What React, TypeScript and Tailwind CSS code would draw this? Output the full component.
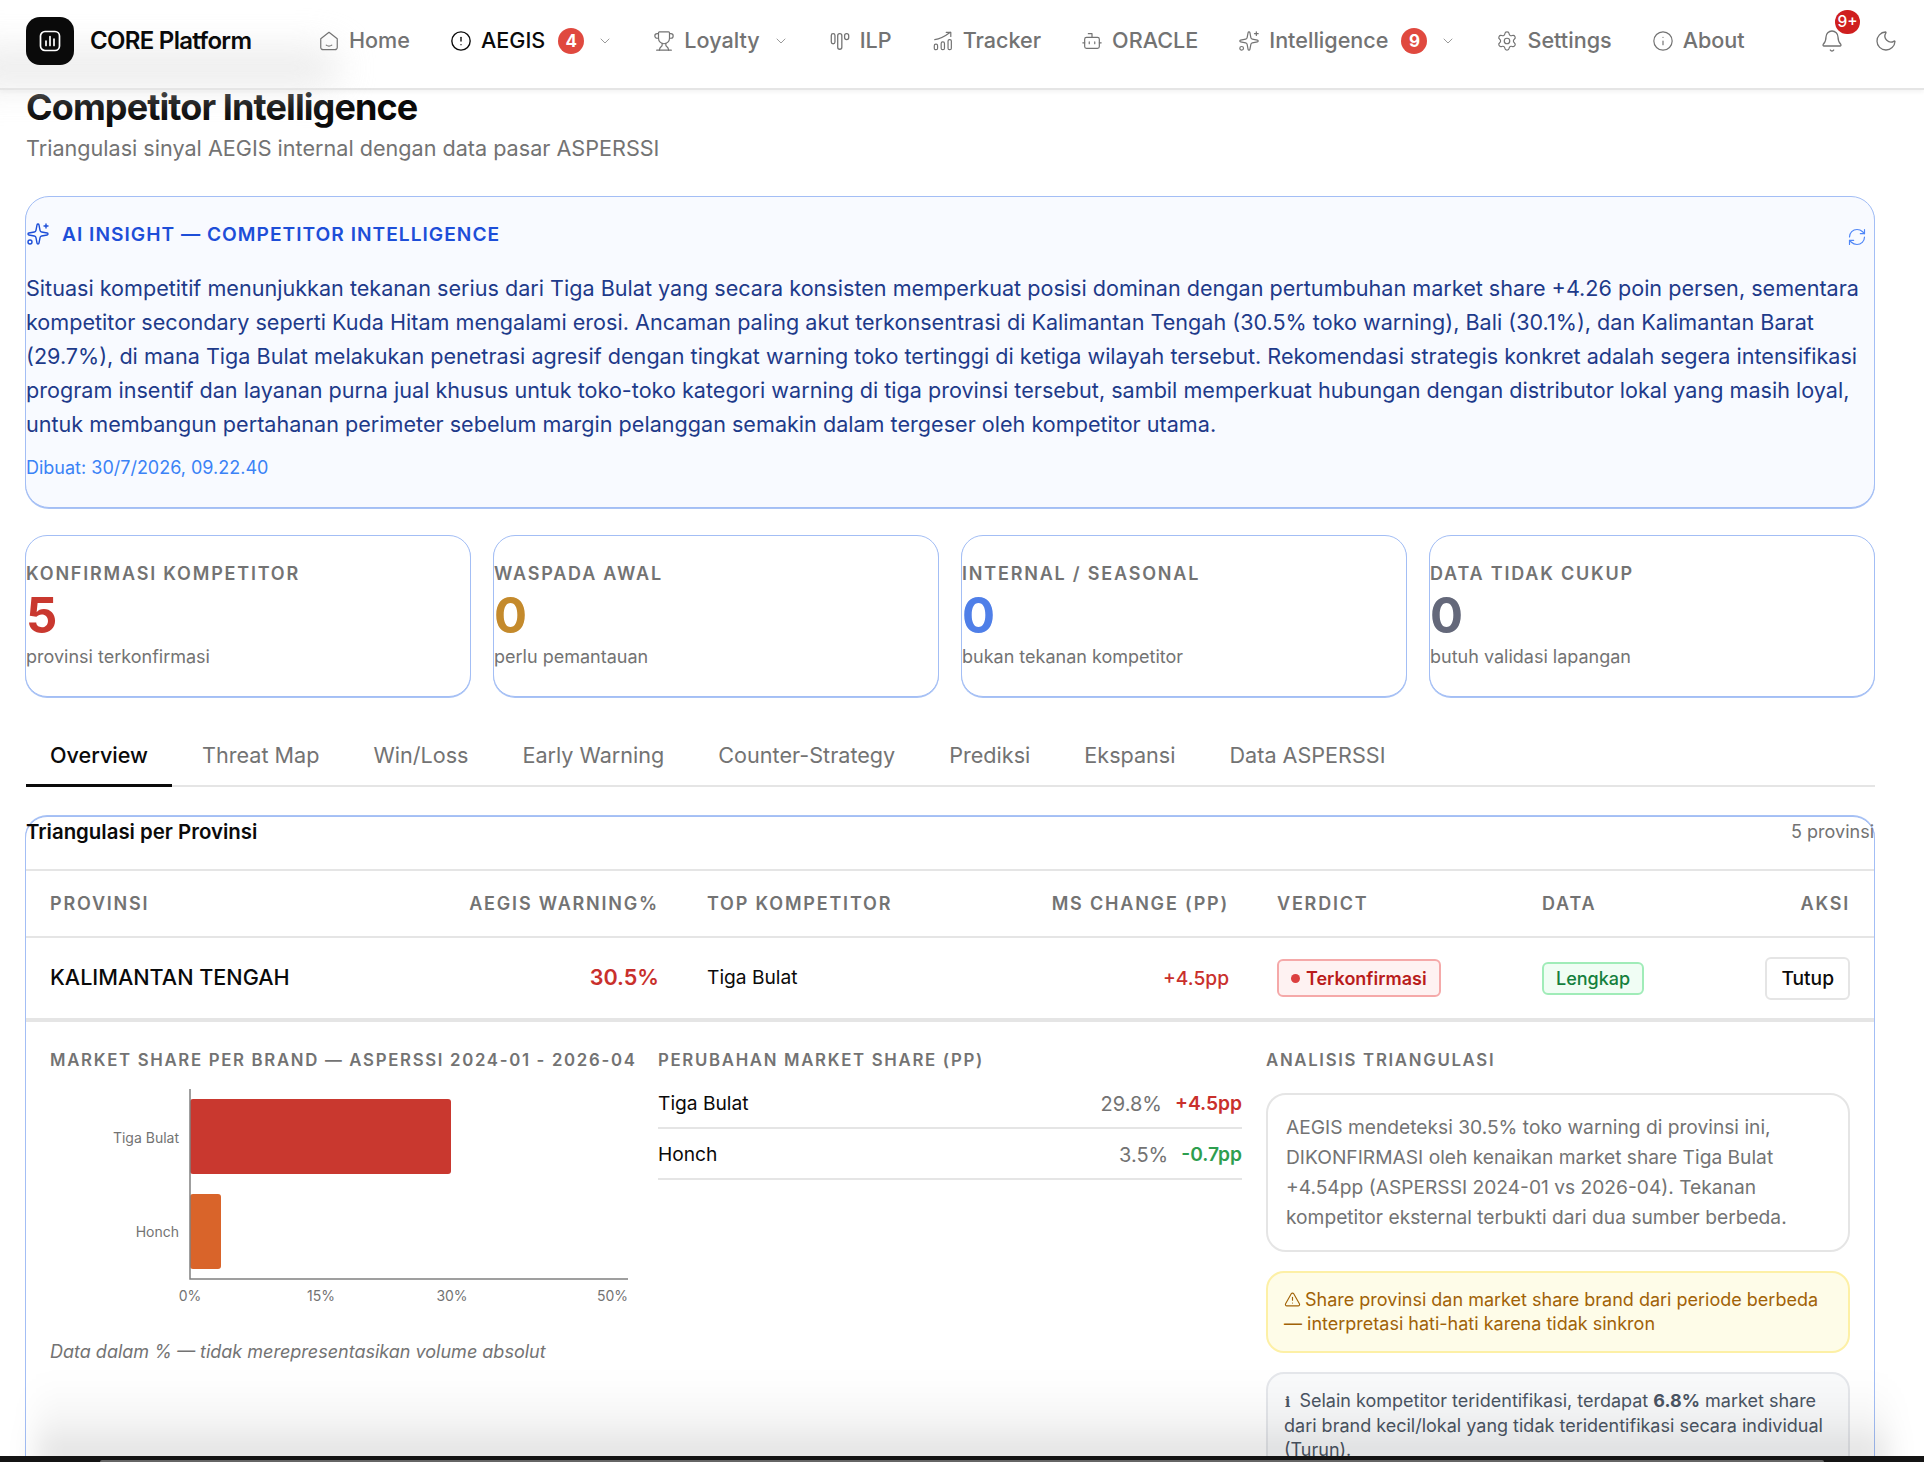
import React from "react";
import { CircleAlert, ChevronDown, Trophy, Bot, Sparkles, Settings, Info, Bell, Moon, RefreshCw, TriangleAlert } from "lucide-react";

const HomeIcon = () => (
  <svg width="22" height="22" viewBox="0 0 24 24" fill="none" stroke="currentColor" strokeWidth="1.3" strokeLinejoin="round" strokeLinecap="round">
    <path d="M12 2.5 21 9.5V19a2.5 2.5 0 0 1-2.5 2.5h-13A2.5 2.5 0 0 1 3 19V9.5Z" />
    <path d="M9 16.5c1.6 1.2 4.4 1.2 6 0" />
  </svg>
);
const IlpIcon = () => (
  <svg width="22" height="22" viewBox="0 0 24 24" fill="none" stroke="currentColor" strokeWidth="1.4">
    <rect x="2.5" y="4" width="4" height="11" rx="2" />
    <rect x="9.5" y="4" width="4.5" height="17" rx="2.2" />
    <rect x="17" y="4" width="4.5" height="6.5" rx="2.2" />
  </svg>
);
const TrackerIcon = () => (
  <svg width="22" height="22" viewBox="0 0 24 24" fill="none" stroke="currentColor" strokeWidth="1.3" strokeLinecap="round" strokeLinejoin="round">
    <rect x="2.5" y="15.5" width="3.6" height="6" rx="1.6" />
    <rect x="10" y="13" width="3.6" height="8.5" rx="1.6" />
    <rect x="17.5" y="10.5" width="3.6" height="11" rx="1.6" />
    <path d="M3 10.5 C8 10 14 7 20 2.5" />
    <path d="M15.5 2.5H20.5V7" />
  </svg>
);
const LogoIcon = () => (
  <svg width="24" height="24" viewBox="0 0 24 24" fill="none" stroke="white" strokeWidth="1.7" strokeLinecap="round">
    <rect x="2.5" y="2.5" width="19" height="19" rx="4.5" />
    <path d="M8 16.5V12M12 16.5V7.5M16 16.5V10" />
  </svg>
);

function NavItem({ icon, label, active, badge, chevron }: { icon: React.ReactNode; label: string; active?: boolean; badge?: string; chevron?: boolean }) {
  return (
    <div className={`flex items-center ${active ? "text-[#0a0a0a]" : "text-[#737373]"}`}>
      <span className="flex w-[22px] justify-center">{icon}</span>
      <span className="ml-[9px] text-[21.6px] leading-none font-medium whitespace-nowrap">{label}</span>
      {badge && (
        <span className="ml-[13px] flex h-[26px] w-[26px] items-center justify-center rounded-full bg-[#e0493f] text-[17px] leading-none font-bold text-white">{badge}</span>
      )}
      {chevron && <ChevronDown size={16} strokeWidth={1.3} className="ml-[13px] text-[#8a8a8a]" />}
    </div>
  );
}

function Stat({ label, value, sub, color }: { label: string; value: string; sub: string; color: string }) {
  return (
    <div className="h-[162px] rounded-[22px] border border-[#a3bef5] bg-white pt-[26px] shadow-[0_1px_0_#a9c3f5]">
      <div className="text-[18px] leading-[24px] font-semibold tracking-[1.8px] text-[#737373]">{label}</div>
      <div className={`mt-[2px] text-[49px] leading-[56px] font-bold ${color}`}>{value}</div>
      <div className="text-[18px] leading-[26px] text-[#737373]">{sub}</div>
    </div>
  );
}

const tabs = ["Threat Map", "Win/Loss", "Early Warning", "Counter-Strategy", "Prediksi", "Ekspansi", "Data ASPERSSI"];

export default function App() {
  return (
    <div className="relative h-[1462px] w-[1924px] overflow-hidden bg-white font-['Inter',sans-serif] text-[#0a0a0a]">
      <header className="relative flex h-[90px] items-center border-b-2 border-[#e5e5e5] bg-white px-[26px] pb-[6px] shadow-[0_2px_4px_rgba(0,0,0,0.05)]">
        <div className="absolute top-[48px] left-[-40px] h-[40px] w-[380px] rounded-full bg-[#e4e4e4] opacity-70 blur-[18px]" />
        <div className="relative flex h-[48px] w-[48px] items-center justify-center rounded-[14px] bg-[#0a0a0a]"><LogoIcon /></div>
        <div className="relative ml-[16px] w-[228px] text-[24px] leading-none font-semibold tracking-[-0.7px]">CORE Platform</div>
        <nav className="relative flex items-center gap-[40px]">
          <NavItem icon={<HomeIcon />} label="Home" />
          <NavItem icon={<CircleAlert size={22} strokeWidth={1.5} />} label="AEGIS" active badge="4" chevron />
          <NavItem icon={<Trophy size={22} strokeWidth={1.3} />} label="Loyalty" chevron />
          <NavItem icon={<IlpIcon />} label="ILP" />
          <NavItem icon={<TrackerIcon />} label="Tracker" />
          <NavItem icon={<Bot size={22} strokeWidth={1.3} />} label="ORACLE" />
          <NavItem icon={<Sparkles size={22} strokeWidth={1.3} />} label="Intelligence" badge="9" chevron />
          <NavItem icon={<Settings size={22} strokeWidth={1.3} />} label="Settings" />
          <NavItem icon={<Info size={22} strokeWidth={1.3} />} label="About" />
        </nav>
        <div className="relative ml-auto flex items-center gap-[30px] text-[#737373]">
          <div className="relative">
            <Bell size={24} strokeWidth={1.3} />
            <span className="absolute top-[-19px] left-[15px] flex h-[24px] w-[25px] items-center justify-center rounded-full bg-[#cf1f1f] text-[15.5px] leading-none font-medium text-white">9+</span>
          </div>
          <Moon size={24} strokeWidth={1.3} />
        </div>
      </header>

      <main className="w-[1875px] pl-[26px]">
        <h1 className="mt-[-3px] text-[36px] leading-[40px] font-bold tracking-[-0.9px]">Competitor Intelligence</h1>
        <p className="mt-[5px] text-[21.6px] leading-[32px] text-[#737373]">Triangulasi sinyal AEGIS internal dengan data pasar ASPERSSI</p>

        <section className="-ml-px mt-[32px] h-[312px] rounded-[24px] border border-[#a3bef5] bg-[#f8faff] pt-[21px] shadow-[0_1px_0_#a9c3f5]">
          <div className="flex items-center">
            <Sparkles size={24} strokeWidth={1.4} className="text-[#1d4ed8]" />
            <span className="ml-[12px] text-[19.2px] leading-[32px] font-semibold tracking-[1px] text-[#1d4ed8]">AI INSIGHT — COMPETITOR INTELLIGENCE</span>
            <RefreshCw size={20} strokeWidth={1.4} className="mt-[6px] mr-[7px] ml-auto text-[#4f86f7]" />
          </div>
          <p className="mt-[21px] pr-[8px] text-[21.6px] leading-[34px] text-[#1e3a8a]">
            Situasi kompetitif menunjukkan tekanan serius dari Tiga Bulat yang secara konsisten memperkuat posisi dominan dengan pertumbuhan market share +4.26 poin persen, sementara kompetitor secondary seperti Kuda Hitam mengalami erosi. Ancaman paling akut terkonsentrasi di Kalimantan Tengah (30.5% toko warning), Bali (30.1%), dan Kalimantan Barat (29.7%), di mana Tiga Bulat melakukan penetrasi agresif dengan tingkat warning toko tertinggi di ketiga wilayah tersebut. Rekomendasi strategis konkret adalah segera intensifikasi program insentif dan layanan purna jual khusus untuk toko-toko kategori warning di tiga provinsi tersebut, sambil memperkuat hubungan dengan distributor lokal yang masih loyal, untuk membangun pertahanan perimeter sebelum margin pelanggan semakin dalam tergeser oleh kompetitor utama.
          </p>
          <div className="mt-[13px] text-[18px] leading-[28px] text-[#3b82f6]">Dibuat: 30/7/2026, 09.22.40</div>
        </section>

        <div className="-ml-px mt-[27px] grid grid-cols-4 gap-[22px]">
          <Stat label="KONFIRMASI KOMPETITOR" value="5" sub="provinsi terkonfirmasi" color="text-[#c9382f]" />
          <Stat label="WASPADA AWAL" value="0" sub="perlu pemantauan" color="text-[#c48a2c]" />
          <Stat label="INTERNAL / SEASONAL" value="0" sub="bukan tekanan kompetitor" color="text-[#4f7fe8]" />
          <Stat label="DATA TIDAK CUKUP" value="0" sub="butuh validasi lapangan" color="text-[#64687a]" />
        </div>

        <div className="mt-[26px] flex h-[64px] gap-[6px] border-b-2 border-[#e5e5e5]">
          <div className="h-[64px] border-b-[3px] border-[#0a0a0a] px-[24px] pt-[16px] text-[21.6px] leading-[32px] font-medium">Overview</div>
          {tabs.map((t) => (
            <div key={t} className="px-[24px] pt-[16px] text-[21.6px] leading-[32px] whitespace-nowrap text-[#737373]">{t}</div>
          ))}
        </div>

        <section className="-ml-px mt-[29px] h-[700px] rounded-t-[22px] border border-[#a3bef5] bg-white shadow-[0_-1px_0_#a9c3f5]">
          <div className="flex h-[54px] items-start justify-between border-b-2 border-[#e5e5e5]">
            <span className="text-[20.4px] leading-[30px] font-semibold">Triangulasi per Provinsi</span>
            <span className="text-[18px] leading-[30px] text-[#737373]">5 provinsi</span>
          </div>
          <table className="w-full table-fixed border-collapse">
            <colgroup>
              <col className="w-[380px]" /><col className="w-[277px]" /><col className="w-[260px]" /><col className="w-[310px]" /><col className="w-[265px]" /><col className="w-[200px]" /><col />
            </colgroup>
            <thead>
              <tr className="h-[66px] border-b-2 border-[#e5e5e5] text-[18px] tracking-[1.8px] text-[#737373]">
                <th className="px-[24px] text-left font-semibold">PROVINSI</th>
                <th className="px-[24px] text-right font-semibold whitespace-nowrap">AEGIS WARNING%</th>
                <th className="px-[24px] text-left font-semibold whitespace-nowrap">TOP KOMPETITOR</th>
                <th className="px-[24px] text-right font-semibold whitespace-nowrap">MS CHANGE (PP)</th>
                <th className="px-[24px] text-left font-semibold">VERDICT</th>
                <th className="px-[24px] text-left font-semibold">DATA</th>
                <th className="px-[24px] text-right font-semibold">AKSI</th>
              </tr>
            </thead>
            <tbody>
              <tr className="h-[83px] border-b-[4px] border-[#e5e5e5]">
                <td className="px-[24px] pb-[2px] text-[21.6px] font-medium whitespace-nowrap">KALIMANTAN TENGAH</td>
                <td className="px-[24px] pb-[2px] text-right text-[21.6px] font-semibold text-[#c9302c]">30.5%</td>
                <td className="px-[24px] pb-[2px] text-[19.2px]">Tiga Bulat</td>
                <td className="px-[24px] text-right text-[19.2px] font-medium text-[#c9302c]">+4.5pp</td>
                <td className="px-[24px]">
                  <span className="inline-flex h-[38px] items-center gap-[6px] rounded-[6px] border-2 border-[#f5a9a9] bg-[#fef2f2] px-[12px] text-[18px] font-semibold text-[#b91c1c]">
                    <span className="h-[9px] w-[9px] rounded-full bg-[#dc4040]" />Terkonfirmasi
                  </span>
                </td>
                <td className="px-[24px]">
                  <span className="inline-flex h-[33px] items-center rounded-[6px] border-2 border-[#a0ecb8] bg-[#f0fdf4] px-[12px] text-[18px] font-medium text-[#15803d]">Lengkap</span>
                </td>
                <td className="px-[24px] text-right">
                  <span className="inline-flex h-[43px] items-center rounded-[6px] border-2 border-[#e5e5e5] px-[14px] text-[19.2px] font-medium">Tutup</span>
                </td>
              </tr>
            </tbody>
          </table>

          <div className="grid grid-cols-3 gap-[24px] px-[24px] pt-[25px]">
            <div>
              <h3 className="text-[16.8px] leading-[26px] font-semibold tracking-[1.68px] whitespace-nowrap text-[#737373]">MARKET SHARE PER BRAND — ASPERSSI 2024-01 - 2026-04</h3>
              <svg width="590" height="228" viewBox="0 0 590 228" className="mt-[16px] block font-['Inter',sans-serif]">
                <rect x="140" y="10" width="261" height="75" rx="3" fill="#c9382f" />
                <rect x="140" y="105" width="31" height="75" rx="3" fill="#d9642a" />
                <path d="M140 0V190H578" fill="none" stroke="#808080" strokeWidth="1.5" />
                <text x="129" y="54" textAnchor="end" fontSize="14" fill="#737373">Tiga Bulat</text>
                <text x="129" y="148" textAnchor="end" fontSize="14" fill="#737373">Honch</text>
                <text x="140" y="212" textAnchor="middle" fontSize="14" fill="#737373">0%</text>
                <text x="271" y="212" textAnchor="middle" fontSize="14" fill="#737373">15%</text>
                <text x="402" y="212" textAnchor="middle" fontSize="14" fill="#737373">30%</text>
                <text x="578" y="212" textAnchor="end" fontSize="14" fill="#737373">50%</text>
              </svg>
              <p className="mt-[21px] text-[18px] leading-[28px] text-[#737373] italic">Data dalam % — tidak merepresentasikan volume absolut</p>
            </div>
            <div>
              <h3 className="text-[16.8px] leading-[26px] font-semibold tracking-[1.68px] text-[#737373]">PERUBAHAN MARKET SHARE (PP)</h3>
              <div className="mt-[7px] flex h-[49px] items-center justify-between border-b-2 border-[#e5e5e5] text-[19.2px]">
                <span>Tiga Bulat</span>
                <span className="flex gap-[13px]"><span className="text-[20px] text-[#737373]">29.8%</span><span className="font-semibold text-[#c9302c]">+4.5pp</span></span>
              </div>
              <div className="flex h-[51px] items-center justify-between border-b-2 border-[#e5e5e5] pt-[2px] text-[19.2px]">
                <span>Honch</span>
                <span className="flex gap-[13px]"><span className="text-[20px] text-[#737373]">3.5%</span><span className="font-semibold text-[#2e9e4f]">-0.7pp</span></span>
              </div>
            </div>
            <div>
              <h3 className="text-[16.8px] leading-[26px] font-semibold tracking-[1.68px] text-[#737373]">ANALISIS TRIANGULASI</h3>
              <div className="mt-[20px] h-[159px] rounded-[20px] border-2 border-[#e5e5e5] px-[18px] pt-[17px] text-[19.2px] leading-[30px] text-[#737373]">
                AEGIS mendeteksi 30.5% toko warning di provinsi ini, DIKONFIRMASI oleh kenaikan market share Tiga Bulat +4.54pp (ASPERSSI 2024-01 vs 2026-04). Tekanan kompetitor eksternal terbukti dari dua sumber berbeda.
              </div>
              <div className="mt-[19px] h-[82px] rounded-[18px] border-2 border-[#fdf0a6] bg-[#fefce8] px-[16px] pt-[15px] text-[18px] leading-[24px] text-[#a16207]">
                <TriangleAlert size={17} strokeWidth={1.6} className="mr-[4px] mb-[3px] inline-block" />Share provinsi dan market share brand dari periode berbeda — interpretasi hati-hati karena tidak sinkron
              </div>
              <div className="mt-[19px] rounded-[18px] border-2 border-[#e5e7eb] bg-[#f9fafb] px-[16px] pt-[15px] pb-[15px] text-[18px] leading-[24px] text-[#4b5563]">
                <span className="mr-[4px] ml-[1px] font-['DejaVu_Serif',serif] text-[14px] font-bold">i</span> Selain kompetitor teridentifikasi, terdapat <strong>6.8%</strong> market share dari brand kecil/lokal yang tidak teridentifikasi secara individual (Turun).
              </div>
            </div>
          </div>
        </section>
      </main>

      <div className="pointer-events-none absolute right-[36px] bottom-[-6px] left-[36px] h-[90px] bg-gradient-to-b from-transparent via-[#0000000a] to-[#00000026] blur-[14px]" />
      <div className="absolute right-0 bottom-0 left-0 h-[6px] bg-[#141414]">
        <div className="mx-[100px] mt-[4px] h-[2px] rounded-t bg-[#666]" />
      </div>
    </div>
  );
}
